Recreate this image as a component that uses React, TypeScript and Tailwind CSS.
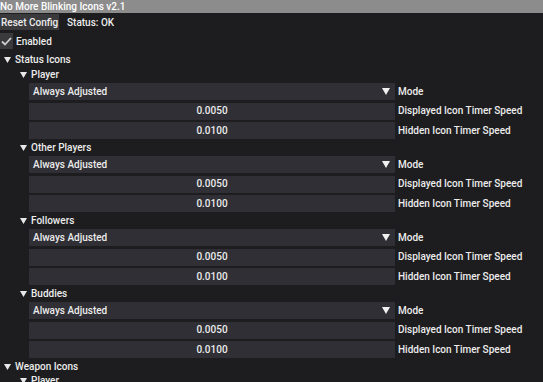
import React from "react";

const Tri = () => (
  <svg width="7" height="6" viewBox="0 0 7 6" className="shrink-0">
    <path d="M0 0 L7 0 L3.5 6 Z" fill="#e8e8e8" />
  </svg>
);

const Header = ({ label, indent }: { label: string; indent: number }) => (
  <div className="flex items-center h-[12px] whitespace-nowrap" style={{ paddingLeft: indent }}>
    <div className="w-[11px] flex justify-start">
      <Tri />
    </div>
    <span className="leading-none">{label}</span>
  </div>
);

const Frame = ({ children, label }: { children: React.ReactNode; label: string }) => (
  <div className="flex items-center h-[17px] pl-[29px] whitespace-nowrap">
    <div className="w-[366px] h-full bg-[#2f2f35] flex items-center relative">{children}</div>
    <span className="ml-[3px] leading-none">{label}</span>
  </div>
);

const Group = ({ name }: { name: string }) => (
  <>
    <Header label={name} indent={20} />
    <Frame label="Mode">
      <span className="pl-[4px] leading-none">Always Adjusted</span>
      <svg width="8" height="7" viewBox="0 0 8 7" className="absolute right-[5px] top-[5px]">
        <path d="M0 0 L8 0 L4 7 Z" fill="#f0f0f0" />
      </svg>
    </Frame>
    <Frame label="Displayed Icon Timer Speed">
      <span className="w-full text-center leading-none">0.0050</span>
    </Frame>
    <Frame label="Hidden Icon Timer Speed">
      <span className="w-full text-center leading-none">0.0100</span>
    </Frame>
  </>
);

export default function App() {
  return (
    <div
      className="w-[543px] h-[382px] overflow-hidden bg-[#1d1d1f] text-[#ececec] text-[10px] font-medium"
      style={{ fontFamily: "Roboto, 'Liberation Sans', sans-serif" }}
    >
      <div className="h-[13px] bg-[#8c8c8c] text-white flex items-center leading-none whitespace-nowrap">
        No More Blinking Icons v2.1
      </div>
      <div className="flex items-center mt-[1px] h-[16px] whitespace-nowrap">
        <div className="h-full bg-[#3a3a3d] flex items-center w-[59px] pl-[1px]">Reset Config</div>
        <span className="ml-[8px]">Status: OK</span>
      </div>
      <div className="flex items-center mt-[3px] h-[16px] whitespace-nowrap">
        <div className="w-[13px] h-full bg-[#3a3a3d] flex items-center justify-center">
          <svg width="11" height="9" viewBox="0 0 11 9">
            <path d="M1 4.5 L4 7.5 L10 1" stroke="#cfcfcf" strokeWidth="1.8" fill="none" />
          </svg>
        </div>
        <span className="ml-[3px]">Enabled</span>
      </div>
      <div className="flex flex-col gap-[2.5px] mt-[5px]">
        <Header label="Status Icons" indent={4} />
        <Group name="Player" />
        <Group name="Other Players" />
        <Group name="Followers" />
        <Group name="Buddies" />
        <Header label="Weapon Icons" indent={4} />
        <Header label="Player" indent={20} />
      </div>
    </div>
  );
}
